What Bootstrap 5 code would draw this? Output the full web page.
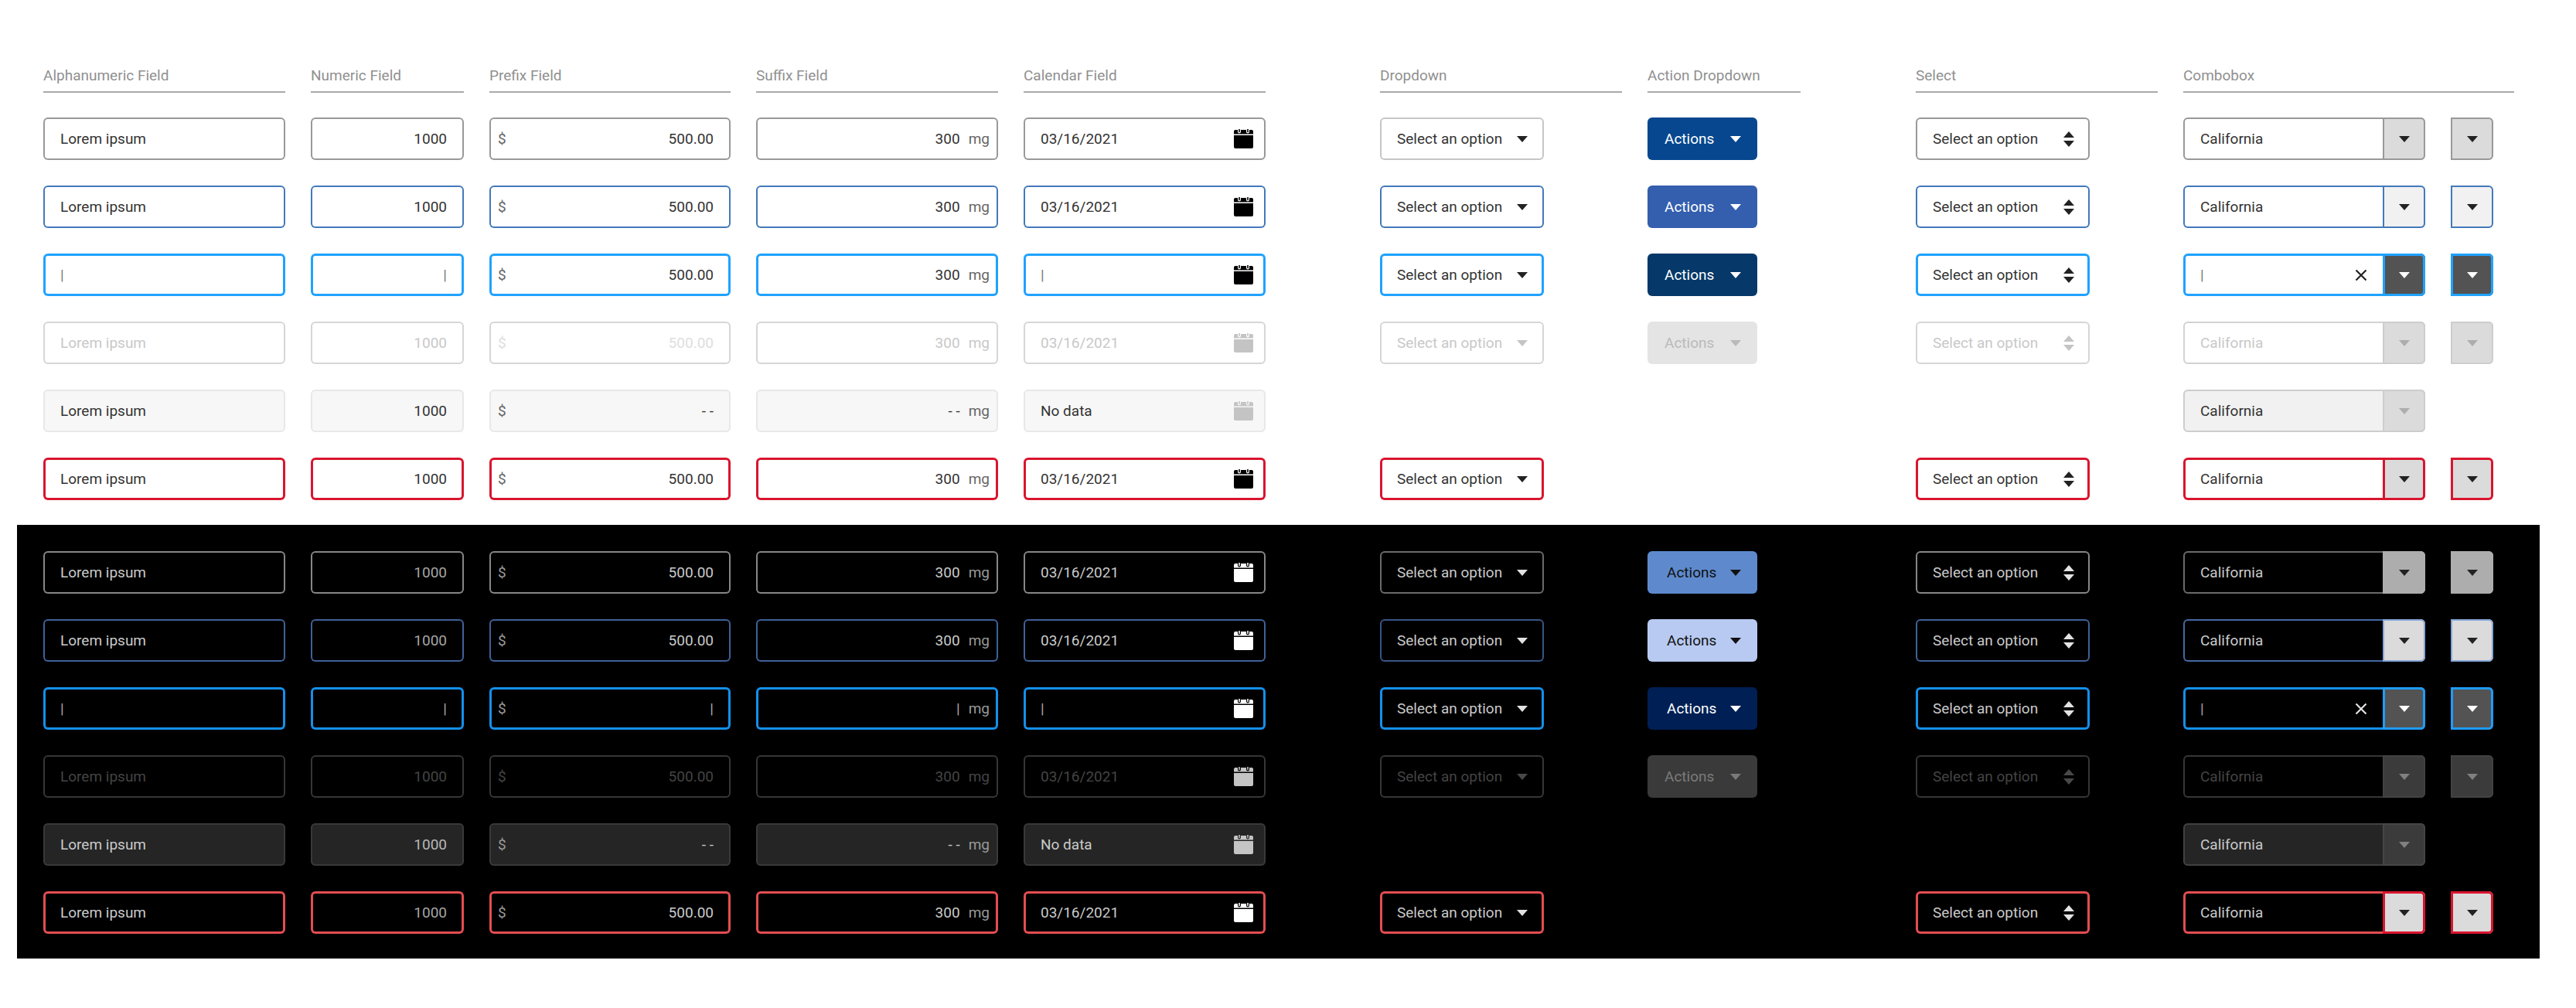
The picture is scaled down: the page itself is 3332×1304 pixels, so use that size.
<!DOCTYPE html>
<html lang="en">
<head>
<meta charset="utf-8">
<meta name="viewport" content="width=device-width, initial-scale=1">
<title>Form field states</title>
<link href="https://cdn.jsdelivr.net/npm/bootstrap@5.3.0/dist/css/bootstrap.min.css" rel="stylesheet">
<style>
body { font-family: Roboto, "Liberation Sans", sans-serif; font-size: 19px; line-height: 24px; background: #fff; }

/* column track shared by the headings and every row of fields */
.track { display: grid; column-gap: 33px; grid-template-columns: 313fr 198fr 312fr 313fr 313fr 82fr 313fr 198fr 83fr 313fr 428fr; }
.t-drop { grid-column: 7; } .t-act { grid-column: 8; } .t-sel { grid-column: 10; } .t-combo { grid-column: 11; }
.rows { display: grid; row-gap: 33px; }
.heads { margin-bottom: 32px; }
.heads h2 { margin: 0; padding-bottom: 8px; border-bottom: 2px solid #a9a9a9; color: #909090; font-size: 19px; line-height: 24px; font-weight: 400; }

.light-set { padding: 86px 80px 32px 56px; }
.dark-set { margin: 0 47px 0 22px; padding: 34px 33px 32px 34px; background: #000; }

/* state variables, light theme */
.state { --line: #999; --w: 2px; --ink: #333; --num: #333; --affix: #666; --fill: transparent; --glyph: #222; --cal: #000;
  --dline: #c6c6c6; --cfill: transparent; --cline: #999; --tfill: #dbdbdb; --tline: #999; --tri: #222; --afill: #07478f; --aink: #fff; min-height: 55px; }
.hov { --line: #4379bb; --dline: #4379bb; --cline: #4379bb; --tline: #4379bb; --tfill: #f1f1f1; --afill: #345eae; }
.foc { --line: #1fa2ff; --w: 3px; --dline: #1fa2ff; --cline: #1fa2ff; --tline: #1fa2ff; --tfill: #535353; --tri: #fff; --afill: #063869; }
.dis { --line: #d6d6d6; --ink: #c8c8c8; --num: #c8c8c8; --affix: #c8c8c8; --glyph: #c4c4c4; --cal: #c4c4c4; --dline: #d6d6d6;
  --cline: #d2d2d2; --tline: #cdcdcd; --tri: #adadad; --afill: #e4e4e4; --aink: #bababa; }
.ro { --line: #e8e8e8; --fill: #f7f7f7; --cal: #c4c4c4; --cfill: #f1f1f1; --cline: #cdcdcd; --tline: #cdcdcd; --tri: #adadad; }
.err { --line: #d9152e; --w: 3px; --dline: #d9152e; --cline: #d9152e; --tline: #d9152e; }

/* state variables, dark theme */
.dark-set .state { --line: #868686; --ink: #cacaca; --num: #a6a6a6; --affix: #999; --glyph: #e2e2e2; --cal: #fff; --dline: #6a6a6a; --cline: #6a6a6a;
  --tfill: #adadad; --tline: #adadad; --afill: #5e8acd; --aink: #111; }
.dark-set .hov { --line: #3f6199; --dline: #375584; --cline: #4468a3; --tfill: #dbdbdb; --tline: #86a6d8; --afill: #b8caf1; }
.dark-set .foc { --line: #1490ec; --dline: #1490ec; --cline: #1490ec; --tfill: #535353; --tline: #1f9cfb; --tri: #fff; --afill: #001f54; --aink: #fff; }
.dark-set .dis { --line: #363636; --ink: #444; --num: #444; --affix: #444; --glyph: #484848; --cal: #c4c4c4; --dline: #363636; --cline: #363636;
  --tfill: #3b3b3b; --tline: #424242; --tri: #808080; --afill: #3a3a3a; --aink: #7a7a7a; }
.dark-set .ro { --line: #393939; --fill: #252525; --num: #b8b8b8; --cal: #c4c4c4; --cfill: #252525; --cline: #414141; --tfill: #3b3b3b; --tline: #464646; --tri: #808080; }
.dark-set .err { --line: #e34d51; --dline: #e34d51; --cline: #e34d51; --tfill: #dbdbdb; --tline: #d9152e; }

.box { display: flex; align-items: center; height: 55px; border-radius: 6px; background: var(--fill); box-shadow: inset 0 0 0 var(--w) var(--line); color: var(--affix); }
.box .form-control, .box .form-control:disabled { flex: 1 1 0; min-width: 0; height: 55px; padding: 0 22px; border: 0; border-radius: 0; background: transparent; color: var(--ink); opacity: 1; font-size: 19px; line-height: 24px; }
.box .form-control.num { text-align: right; color: var(--ink); }
.box .form-control.num.dim { color: var(--num); }
.box .form-control.caret { color: #777; }
.dark-set .box .form-control.caret { color: #aaa; }
.soft { --ink: #dedede; --affix: #dedede; }
.dark-set .soft { --ink: #444; --affix: #444; }
.pre { padding-left: 11px; }
.suf { padding-right: 11px; }
.suf .form-control.num { padding-right: 11px; }
.cal-btn, .clear-btn { display: flex; padding: 0; border: 0; background: transparent; color: var(--cal); }
.cal-btn { margin-right: 16px; }
.clear-btn { margin-right: 20px; color: var(--glyph); }
svg { display: block; fill: currentColor; }

.drop { width: 212px; height: 55px; padding: 0 21px 0 22px; border: 0; border-radius: 6px; background: transparent; box-shadow: inset 0 0 0 var(--w) var(--dline); color: var(--ink); }
.drop svg, .pick svg { color: var(--glyph); }
.act { width: 142px; height: 55px; padding: 0 21px 0 22px; border: 0; border-radius: 6px; background: var(--afill); color: var(--aink); }
.drop, .act { display: flex; align-items: center; justify-content: space-between; font-size: 19px; line-height: 24px; }
.dark-set .act:enabled { padding-left: 25px; }
.act:disabled, .drop:disabled { opacity: 1; }
.drop:disabled { color: var(--ink); }
.act:disabled { background: var(--afill); color: var(--aink); }

.pick { display: grid; align-items: center; width: 225px; border-radius: 6px; box-shadow: inset 0 0 0 var(--w) var(--line); }
.pick .form-select, .pick .form-select:disabled { grid-area: 1 / 1; height: 55px; padding: 0 50px 0 22px; border: 0; background: none; color: var(--ink); opacity: 1; font-size: 19px; line-height: 24px; }
.pick svg { grid-area: 1 / 1; justify-self: end; margin-right: 20px; pointer-events: none; }

.combo { width: 313px; --fill: var(--cfill); --line: var(--cline); }
.tog { display: flex; flex: none; align-items: center; justify-content: center; width: 55px; height: 55px; padding: 0; border: 0; border-radius: 0 6px 6px 0; background: var(--tfill); box-shadow: inset 0 0 0 var(--w) var(--tline); color: var(--tri); }
.combo-set { display: flex; gap: 33px; }
</style>
</head>
<body>
<svg width="0" height="0" class="position-absolute" aria-hidden="true">
  <symbol id="tri" viewBox="0 0 14 8"><path d="M0 0h14L7 8z"/></symbol>
  <symbol id="sort" viewBox="0 0 14 20"><path d="M0 8h14L7 0zM0 12h14l-7 8z"/></symbol>
  <symbol id="cross" viewBox="0 0 16 16"><path d="M1.500 1.500l13 13M14.500 1.500l-13 13" fill="none" stroke="currentColor" stroke-width="2.200"/></symbol>
  <symbol id="cal" viewBox="0 0 25 25"><path d="M2 1h3v2.500a2 2 0 0 0 4 0V1h7v2.500a2 2 0 0 0 4 0V1h3a2 2 0 0 1 2 2v3.500H0V3a2 2 0 0 1 2-2zM0 8h25v15a2 2 0 0 1-2 2H2a2 2 0 0 1-2-2z"/><path d="M6.200 0h1.600v3.500a.8.8 0 0 1-1.600 0zM17.200 0h1.600v3.500a.8.8 0 0 1-1.600 0z"/></symbol>
</svg>

<main>
<section class="light-set" aria-label="Light theme">
  <div class="track heads">
    <h2 id="h-alpha">Alphanumeric Field</h2><h2 id="h-num">Numeric Field</h2><h2 id="h-pre">Prefix Field</h2><h2 id="h-suf">Suffix Field</h2><h2 id="h-cal">Calendar Field</h2>
    <h2 id="h-drop" class="t-drop">Dropdown</h2><h2 id="h-act" class="t-act">Action Dropdown</h2><h2 id="h-sel" class="t-sel">Select</h2><h2 id="h-combo" class="t-combo">Combobox</h2>
  </div>
  <div class="rows">
    <div class="track state">
      <div class="box"><input class="form-control" type="text" aria-labelledby="h-alpha" value="Lorem ipsum"></div>
      <div class="box"><input class="form-control num dim" type="text" aria-labelledby="h-num" value="1000"></div>
      <div class="box pre"><span>$</span><input class="form-control num" type="text" aria-labelledby="h-pre" value="500.00"></div>
      <div class="box suf"><input class="form-control num" type="text" aria-labelledby="h-suf" value="300"><span>mg</span></div>
      <div class="box"><input class="form-control" type="text" aria-labelledby="h-cal" value="03/16/2021"><button type="button" class="cal-btn" aria-label="Open calendar"><svg width="25" height="25"><use href="#cal"/></svg></button></div>
      <button type="button" class="drop t-drop">Select an option<svg width="14" height="8"><use href="#tri"/></svg></button>
      <button type="button" class="act t-act">Actions<svg width="14" height="8"><use href="#tri"/></svg></button>
      <div class="pick t-sel"><select class="form-select" aria-labelledby="h-sel"><option>Select an option</option></select><svg width="14" height="20"><use href="#sort"/></svg></div>
      <div class="combo-set t-combo"><div class="box combo"><input class="form-control" type="text" aria-labelledby="h-combo" value="California"><button type="button" class="tog" aria-label="Show options"><svg width="14" height="8"><use href="#tri"/></svg></button></div><button type="button" class="tog" aria-label="Show options"><svg width="14" height="8"><use href="#tri"/></svg></button></div>
    </div>
    <div class="track state hov">
      <div class="box"><input class="form-control" type="text" aria-labelledby="h-alpha" value="Lorem ipsum"></div>
      <div class="box"><input class="form-control num dim" type="text" aria-labelledby="h-num" value="1000"></div>
      <div class="box pre"><span>$</span><input class="form-control num" type="text" aria-labelledby="h-pre" value="500.00"></div>
      <div class="box suf"><input class="form-control num" type="text" aria-labelledby="h-suf" value="300"><span>mg</span></div>
      <div class="box"><input class="form-control" type="text" aria-labelledby="h-cal" value="03/16/2021"><button type="button" class="cal-btn" aria-label="Open calendar"><svg width="25" height="25"><use href="#cal"/></svg></button></div>
      <button type="button" class="drop t-drop">Select an option<svg width="14" height="8"><use href="#tri"/></svg></button>
      <button type="button" class="act t-act">Actions<svg width="14" height="8"><use href="#tri"/></svg></button>
      <div class="pick t-sel"><select class="form-select" aria-labelledby="h-sel"><option>Select an option</option></select><svg width="14" height="20"><use href="#sort"/></svg></div>
      <div class="combo-set t-combo"><div class="box combo"><input class="form-control" type="text" aria-labelledby="h-combo" value="California"><button type="button" class="tog" aria-label="Show options"><svg width="14" height="8"><use href="#tri"/></svg></button></div><button type="button" class="tog" aria-label="Show options"><svg width="14" height="8"><use href="#tri"/></svg></button></div>
    </div>
    <div class="track state foc">
      <div class="box"><input class="form-control caret" type="text" aria-labelledby="h-alpha" value="|"></div>
      <div class="box"><input class="form-control num caret" type="text" aria-labelledby="h-num" value="|"></div>
      <div class="box pre"><span>$</span><input class="form-control num" type="text" aria-labelledby="h-pre" value="500.00"></div>
      <div class="box suf"><input class="form-control num" type="text" aria-labelledby="h-suf" value="300"><span>mg</span></div>
      <div class="box"><input class="form-control caret" type="text" aria-labelledby="h-cal" value="|"><button type="button" class="cal-btn" aria-label="Open calendar"><svg width="25" height="25"><use href="#cal"/></svg></button></div>
      <button type="button" class="drop t-drop">Select an option<svg width="14" height="8"><use href="#tri"/></svg></button>
      <button type="button" class="act t-act">Actions<svg width="14" height="8"><use href="#tri"/></svg></button>
      <div class="pick t-sel"><select class="form-select" aria-labelledby="h-sel"><option>Select an option</option></select><svg width="14" height="20"><use href="#sort"/></svg></div>
      <div class="combo-set t-combo"><div class="box combo"><input class="form-control caret" type="text" aria-labelledby="h-combo" value="|"><button type="button" class="clear-btn" aria-label="Clear"><svg width="16" height="16"><use href="#cross"/></svg></button><button type="button" class="tog" aria-label="Show options"><svg width="14" height="8"><use href="#tri"/></svg></button></div><button type="button" class="tog" aria-label="Show options"><svg width="14" height="8"><use href="#tri"/></svg></button></div>
    </div>
    <div class="track state dis">
      <div class="box"><input class="form-control" type="text" aria-labelledby="h-alpha" value="Lorem ipsum" disabled></div>
      <div class="box"><input class="form-control num dim" type="text" aria-labelledby="h-num" value="1000" disabled></div>
      <div class="box pre soft"><span>$</span><input class="form-control num" type="text" aria-labelledby="h-pre" value="500.00" disabled></div>
      <div class="box suf"><input class="form-control num" type="text" aria-labelledby="h-suf" value="300" disabled><span>mg</span></div>
      <div class="box"><input class="form-control" type="text" aria-labelledby="h-cal" value="03/16/2021" disabled><button type="button" class="cal-btn" aria-label="Open calendar" disabled><svg width="25" height="25"><use href="#cal"/></svg></button></div>
      <button type="button" class="drop t-drop" disabled>Select an option<svg width="14" height="8"><use href="#tri"/></svg></button>
      <button type="button" class="act t-act" disabled>Actions<svg width="14" height="8"><use href="#tri"/></svg></button>
      <div class="pick t-sel"><select class="form-select" aria-labelledby="h-sel" disabled><option>Select an option</option></select><svg width="14" height="20"><use href="#sort"/></svg></div>
      <div class="combo-set t-combo"><div class="box combo"><input class="form-control" type="text" aria-labelledby="h-combo" value="California" disabled><button type="button" class="tog" aria-label="Show options" disabled><svg width="14" height="8"><use href="#tri"/></svg></button></div><button type="button" class="tog" aria-label="Show options" disabled><svg width="14" height="8"><use href="#tri"/></svg></button></div>
    </div>
    <div class="track state ro">
      <div class="box"><input class="form-control" type="text" aria-labelledby="h-alpha" value="Lorem ipsum" readonly></div>
      <div class="box"><input class="form-control num dim" type="text" aria-labelledby="h-num" value="1000" readonly></div>
      <div class="box pre"><span>$</span><input class="form-control num" type="text" aria-labelledby="h-pre" value="- -" readonly></div>
      <div class="box suf"><input class="form-control num" type="text" aria-labelledby="h-suf" value="- -" readonly><span>mg</span></div>
      <div class="box"><input class="form-control" type="text" aria-labelledby="h-cal" value="No data" readonly><button type="button" class="cal-btn" aria-label="Open calendar" disabled><svg width="25" height="25"><use href="#cal"/></svg></button></div>
      <div class="combo-set t-combo"><div class="box combo"><input class="form-control" type="text" aria-labelledby="h-combo" value="California" readonly><button type="button" class="tog" aria-label="Show options" disabled><svg width="14" height="8"><use href="#tri"/></svg></button></div></div>
    </div>
    <div class="track state err">
      <div class="box"><input class="form-control" type="text" aria-labelledby="h-alpha" value="Lorem ipsum"></div>
      <div class="box"><input class="form-control num dim" type="text" aria-labelledby="h-num" value="1000"></div>
      <div class="box pre"><span>$</span><input class="form-control num" type="text" aria-labelledby="h-pre" value="500.00"></div>
      <div class="box suf"><input class="form-control num" type="text" aria-labelledby="h-suf" value="300"><span>mg</span></div>
      <div class="box"><input class="form-control" type="text" aria-labelledby="h-cal" value="03/16/2021"><button type="button" class="cal-btn" aria-label="Open calendar"><svg width="25" height="25"><use href="#cal"/></svg></button></div>
      <button type="button" class="drop t-drop">Select an option<svg width="14" height="8"><use href="#tri"/></svg></button>
      <div class="pick t-sel"><select class="form-select" aria-labelledby="h-sel"><option>Select an option</option></select><svg width="14" height="20"><use href="#sort"/></svg></div>
      <div class="combo-set t-combo"><div class="box combo"><input class="form-control" type="text" aria-labelledby="h-combo" value="California"><button type="button" class="tog" aria-label="Show options"><svg width="14" height="8"><use href="#tri"/></svg></button></div><button type="button" class="tog" aria-label="Show options"><svg width="14" height="8"><use href="#tri"/></svg></button></div>
    </div>
  </div>
</section>

<section class="dark-set" aria-label="Dark theme">
  <div class="rows">
    <div class="track state">
      <div class="box"><input class="form-control" type="text" aria-labelledby="h-alpha" value="Lorem ipsum"></div>
      <div class="box"><input class="form-control num dim" type="text" aria-labelledby="h-num" value="1000"></div>
      <div class="box pre"><span>$</span><input class="form-control num" type="text" aria-labelledby="h-pre" value="500.00"></div>
      <div class="box suf"><input class="form-control num" type="text" aria-labelledby="h-suf" value="300"><span>mg</span></div>
      <div class="box"><input class="form-control" type="text" aria-labelledby="h-cal" value="03/16/2021"><button type="button" class="cal-btn" aria-label="Open calendar"><svg width="25" height="25"><use href="#cal"/></svg></button></div>
      <button type="button" class="drop t-drop">Select an option<svg width="14" height="8"><use href="#tri"/></svg></button>
      <button type="button" class="act t-act">Actions<svg width="14" height="8"><use href="#tri"/></svg></button>
      <div class="pick t-sel"><select class="form-select" aria-labelledby="h-sel"><option>Select an option</option></select><svg width="14" height="20"><use href="#sort"/></svg></div>
      <div class="combo-set t-combo"><div class="box combo"><input class="form-control" type="text" aria-labelledby="h-combo" value="California"><button type="button" class="tog" aria-label="Show options"><svg width="14" height="8"><use href="#tri"/></svg></button></div><button type="button" class="tog" aria-label="Show options"><svg width="14" height="8"><use href="#tri"/></svg></button></div>
    </div>
    <div class="track state hov">
      <div class="box"><input class="form-control" type="text" aria-labelledby="h-alpha" value="Lorem ipsum"></div>
      <div class="box"><input class="form-control num dim" type="text" aria-labelledby="h-num" value="1000"></div>
      <div class="box pre"><span>$</span><input class="form-control num" type="text" aria-labelledby="h-pre" value="500.00"></div>
      <div class="box suf"><input class="form-control num" type="text" aria-labelledby="h-suf" value="300"><span>mg</span></div>
      <div class="box"><input class="form-control" type="text" aria-labelledby="h-cal" value="03/16/2021"><button type="button" class="cal-btn" aria-label="Open calendar"><svg width="25" height="25"><use href="#cal"/></svg></button></div>
      <button type="button" class="drop t-drop">Select an option<svg width="14" height="8"><use href="#tri"/></svg></button>
      <button type="button" class="act t-act">Actions<svg width="14" height="8"><use href="#tri"/></svg></button>
      <div class="pick t-sel"><select class="form-select" aria-labelledby="h-sel"><option>Select an option</option></select><svg width="14" height="20"><use href="#sort"/></svg></div>
      <div class="combo-set t-combo"><div class="box combo"><input class="form-control" type="text" aria-labelledby="h-combo" value="California"><button type="button" class="tog" aria-label="Show options"><svg width="14" height="8"><use href="#tri"/></svg></button></div><button type="button" class="tog" aria-label="Show options"><svg width="14" height="8"><use href="#tri"/></svg></button></div>
    </div>
    <div class="track state foc">
      <div class="box"><input class="form-control caret" type="text" aria-labelledby="h-alpha" value="|"></div>
      <div class="box"><input class="form-control num caret" type="text" aria-labelledby="h-num" value="|"></div>
      <div class="box pre"><span>$</span><input class="form-control num caret" type="text" aria-labelledby="h-pre" value="|"></div>
      <div class="box suf"><input class="form-control num caret" type="text" aria-labelledby="h-suf" value="|"><span>mg</span></div>
      <div class="box"><input class="form-control caret" type="text" aria-labelledby="h-cal" value="|"><button type="button" class="cal-btn" aria-label="Open calendar"><svg width="25" height="25"><use href="#cal"/></svg></button></div>
      <button type="button" class="drop t-drop">Select an option<svg width="14" height="8"><use href="#tri"/></svg></button>
      <button type="button" class="act t-act">Actions<svg width="14" height="8"><use href="#tri"/></svg></button>
      <div class="pick t-sel"><select class="form-select" aria-labelledby="h-sel"><option>Select an option</option></select><svg width="14" height="20"><use href="#sort"/></svg></div>
      <div class="combo-set t-combo"><div class="box combo"><input class="form-control caret" type="text" aria-labelledby="h-combo" value="|"><button type="button" class="clear-btn" aria-label="Clear"><svg width="16" height="16"><use href="#cross"/></svg></button><button type="button" class="tog" aria-label="Show options"><svg width="14" height="8"><use href="#tri"/></svg></button></div><button type="button" class="tog" aria-label="Show options"><svg width="14" height="8"><use href="#tri"/></svg></button></div>
    </div>
    <div class="track state dis">
      <div class="box"><input class="form-control" type="text" aria-labelledby="h-alpha" value="Lorem ipsum" disabled></div>
      <div class="box"><input class="form-control num dim" type="text" aria-labelledby="h-num" value="1000" disabled></div>
      <div class="box pre soft"><span>$</span><input class="form-control num" type="text" aria-labelledby="h-pre" value="500.00" disabled></div>
      <div class="box suf"><input class="form-control num" type="text" aria-labelledby="h-suf" value="300" disabled><span>mg</span></div>
      <div class="box"><input class="form-control" type="text" aria-labelledby="h-cal" value="03/16/2021" disabled><button type="button" class="cal-btn" aria-label="Open calendar" disabled><svg width="25" height="25"><use href="#cal"/></svg></button></div>
      <button type="button" class="drop t-drop" disabled>Select an option<svg width="14" height="8"><use href="#tri"/></svg></button>
      <button type="button" class="act t-act" disabled>Actions<svg width="14" height="8"><use href="#tri"/></svg></button>
      <div class="pick t-sel"><select class="form-select" aria-labelledby="h-sel" disabled><option>Select an option</option></select><svg width="14" height="20"><use href="#sort"/></svg></div>
      <div class="combo-set t-combo"><div class="box combo"><input class="form-control" type="text" aria-labelledby="h-combo" value="California" disabled><button type="button" class="tog" aria-label="Show options" disabled><svg width="14" height="8"><use href="#tri"/></svg></button></div><button type="button" class="tog" aria-label="Show options" disabled><svg width="14" height="8"><use href="#tri"/></svg></button></div>
    </div>
    <div class="track state ro">
      <div class="box"><input class="form-control" type="text" aria-labelledby="h-alpha" value="Lorem ipsum" readonly></div>
      <div class="box"><input class="form-control num dim" type="text" aria-labelledby="h-num" value="1000" readonly></div>
      <div class="box pre"><span>$</span><input class="form-control num" type="text" aria-labelledby="h-pre" value="- -" readonly></div>
      <div class="box suf"><input class="form-control num" type="text" aria-labelledby="h-suf" value="- -" readonly><span>mg</span></div>
      <div class="box"><input class="form-control" type="text" aria-labelledby="h-cal" value="No data" readonly><button type="button" class="cal-btn" aria-label="Open calendar" disabled><svg width="25" height="25"><use href="#cal"/></svg></button></div>
      <div class="combo-set t-combo"><div class="box combo"><input class="form-control" type="text" aria-labelledby="h-combo" value="California" readonly><button type="button" class="tog" aria-label="Show options" disabled><svg width="14" height="8"><use href="#tri"/></svg></button></div></div>
    </div>
    <div class="track state err">
      <div class="box"><input class="form-control" type="text" aria-labelledby="h-alpha" value="Lorem ipsum"></div>
      <div class="box"><input class="form-control num dim" type="text" aria-labelledby="h-num" value="1000"></div>
      <div class="box pre"><span>$</span><input class="form-control num" type="text" aria-labelledby="h-pre" value="500.00"></div>
      <div class="box suf"><input class="form-control num" type="text" aria-labelledby="h-suf" value="300"><span>mg</span></div>
      <div class="box"><input class="form-control" type="text" aria-labelledby="h-cal" value="03/16/2021"><button type="button" class="cal-btn" aria-label="Open calendar"><svg width="25" height="25"><use href="#cal"/></svg></button></div>
      <button type="button" class="drop t-drop">Select an option<svg width="14" height="8"><use href="#tri"/></svg></button>
      <div class="pick t-sel"><select class="form-select" aria-labelledby="h-sel"><option>Select an option</option></select><svg width="14" height="20"><use href="#sort"/></svg></div>
      <div class="combo-set t-combo"><div class="box combo"><input class="form-control" type="text" aria-labelledby="h-combo" value="California"><button type="button" class="tog" aria-label="Show options"><svg width="14" height="8"><use href="#tri"/></svg></button></div><button type="button" class="tog" aria-label="Show options"><svg width="14" height="8"><use href="#tri"/></svg></button></div>
    </div>
  </div>
</section>
</main>
<script src="https://cdn.jsdelivr.net/npm/bootstrap@5.3.0/dist/js/bootstrap.bundle.min.js"></script>
</body>
</html>
